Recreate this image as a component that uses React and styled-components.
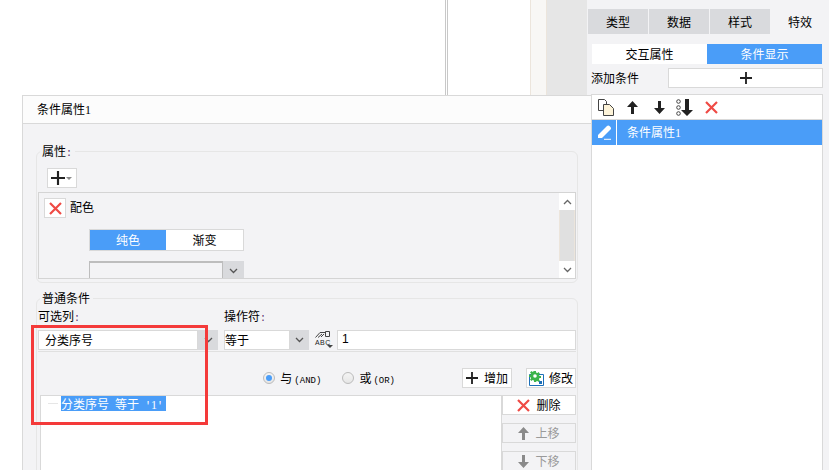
import React from "react";
import styled, { createGlobalStyle } from "styled-components";

const Global = createGlobalStyle`
  html, body { margin: 0; padding: 0; background: #fff; }
  * { box-sizing: border-box; }
  body { font-family: "Noto Sans CJK SC", "Liberation Sans", sans-serif; font-size: 12px; color: #000; }
`;

const BLUE = "#4a9df8";
const LINE = "#d9d9d9";
const GREY = "#d9dadd";
const BG = "#f3f3f5";

const Page = styled.div`
  position: relative; width: 829px; height: 470px; overflow: hidden; display: flex; background: #fff;
`;
const Canvas = styled.div`display: flex; width: 587px; height: 100%;`;
const Sheet = styled.div`width: 446px; background: #fff; border-right: 1px solid #c8c8c8;`;
const Sheet2 = styled.div`
  width: 83px; background: #fff; border-left: 1px solid #c8c8c8; margin-left: 1px;
`;
const Ruler = styled.div`
  width: 17px; background: #f8f7f5; border-left: 1px solid #ece5dc; border-right: 1px solid #ece5dc;
`;
const Gutter = styled.div`flex: 1; background: #e6e6e6;`;

const Side = styled.div`
  width: 242px; background: ${BG}; padding-top: 9px; display: flex; flex-direction: column;
`;
const Tabs = styled.div`display: flex; gap: 1px; padding-left: 1px; height: 25px; flex: none;`;
const Tab = styled.div`
  width: ${p => (p.$on ? "58px" : "60px")}; background: ${p => (p.$on ? BG : GREY)};
  display: flex; align-items: center; justify-content: center; padding-bottom: 1px;
`;
const SubTabs = styled.div`display: flex; margin: 10px 0 0 5px; width: 230px; height: 20px; flex: none;`;
const SubTab = styled.div`
  flex: 1; background: ${p => (p.$on ? BLUE : "#fff")}; color: ${p => (p.$on ? "#fff" : "#000")};
  display: flex; align-items: center; justify-content: center; padding-bottom: 2px;
`;
const AddRow = styled.div`
  display: flex; align-items: center; justify-content: space-between; height: 20px; width: 232px;
  margin: 4px 0 0 4px; flex: none;
`;
const AddLabel = styled.span`margin-bottom: 2px;`;
const AddBtn = styled.div`
  width: 155px; height: 20px; background: #fff; border: 1px solid ${LINE};
  display: flex; align-items: center; justify-content: center;
`;
const ListBox = styled.div`
  width: 232px; margin: 6px 0 0 4px; flex: 1; background: #fff; border: 1px solid ${LINE}; border-bottom: 0;
`;
const Toolbar = styled.div`
  height: 25px; display: flex; align-items: center; padding-left: 6px; border-bottom: 1px solid ${LINE};
`;
const ToolSlot = styled.span`
  display: flex; justify-content: center; width: ${p => p.$w}px; margin-left: ${p => p.$ml || 0}px;
`;
const ListRow = styled.div`
  height: 25px; background: ${BLUE}; color: #fff; display: flex; align-items: center;
`;
const PenCell = styled.div`
  width: 25px; height: 100%; border-right: 1px solid #fff; display: flex; align-items: center; justify-content: center;
`;
const RowText = styled.span`margin: 0 0 2px 10px;`;

const Dialog = styled.div`
  position: absolute; left: 22px; top: 95px; width: 570px; height: 376px; overflow: hidden;
  background: ${BG}; border: 1px solid ${LINE}; border-bottom: 0;
`;
const Title = styled.div`
  height: 28px; background: #fcfcfc; border-bottom: 1px solid ${LINE}; padding: 0 0 2px 14px;
  display: flex; align-items: center;
`;
const Body = styled.div`padding-left: 13px; width: 555px;`;
const Group = styled.div`
  position: relative; width: 542px; height: ${p => p.$h}px; margin-top: ${p => p.$mt}px;
  border: 1px solid #e6e6e6; border-radius: 6px; padding: ${p => p.$pad};
`;
const Legend = styled.span`
  position: absolute; left: 3px; top: -11px; padding: 0 3px 0 2px; background: ${BG}; line-height: 20px;
`;
const Colon = styled.span`color: #5a2d6e; font-family: "Liberation Mono", monospace; font-size: 10px;`;
const Latin = styled.span`font-family: "Liberation Mono", monospace; font-size: 10px;`;
const RadioLatin = styled.span`font-family: "Liberation Mono", monospace; font-size: 9px; margin-left: 2px;`;
const Digit = styled.span`font-family: "Liberation Serif", serif; font-size: 12px;`;
const PlusBtn = styled.div`
  width: 30px; height: 20px; margin-left: 10px; background: #fff; border: 1px solid ${LINE};
  display: flex; align-items: center; padding-left: 3px; gap: 1px;
`;
const Caret = styled.span`
  width: 0; height: 0; border: 3px solid transparent; border-top: 3px solid #8a8a8a; border-bottom: 0;
`;
const Inner = styled.div`
  position: relative; margin: 4px 0 0 1px; width: 538px; height: 87px; border: 1px solid #d4d4d4; overflow: hidden;
  padding: 5px 0 0 5px;
`;
const ColorRow = styled.div`display: flex; align-items: center; gap: 4px; height: 20px;`;
const ColorLabel = styled.span`margin-bottom: 3px;`;
const XBtn = styled.div`
  width: 22px; height: 20px; background: #fff; border: 1px solid ${LINE};
  display: flex; align-items: center; justify-content: center;
`;
const Segment = styled.div`
  display: flex; width: 155px; height: 22px; margin: 11px 0 0 45px; border: 1px solid ${LINE}; background: #fff;
`;
const Seg = styled.div`
  width: ${p => (p.$on ? "76px" : "77px")}; background: ${p => (p.$on ? BLUE : "#fff")}; color: ${p => (p.$on ? "#fff" : "#000")};
  display: flex; align-items: center; justify-content: center; padding-bottom: 2px;
`;
const FillCombo = styled.div`
  display: flex; width: 155px; height: 20px; margin: 10px 0 0 45px;
`;
const FillInput = styled.div`
  flex: 1; border: 1px solid #bdbdbd; border-top-width: 2px; border-bottom: 0; background: ${BG};
`;
const Arrow = styled.div`
  width: ${p => p.$w}px; background: ${GREY}; display: flex; align-items: center; justify-content: center;
`;
const Scroll = styled.div`
  position: absolute; right: 0; top: 0; bottom: 0; width: 16px; display: flex; flex-direction: column;
`;
const ScrollBtn = styled.div`
  height: 17px; background: #fff; display: flex; align-items: center; justify-content: center;
`;
const Thumb = styled.div`
  flex: 1; background: #e0e0e0; border-left: 1px solid #ece5dc; border-right: 1px solid #ece5dc;
`;
const Labels = styled.div`
  display: flex; height: 14px; margin: 10px 0 0 1px; line-height: 14px;
`;
const LabelCell = styled.div`width: ${p => p.$w}px;`;
const FieldRow = styled.div`
  display: flex; height: 22px; margin: 7px 0 0 1px; width: 538px; border-bottom: 1px solid #e0e0e0;
`;
const Combo = styled.div`display: flex; width: ${p => p.$w}px; height: 20px; margin-right: ${p => p.$mr}px;`;
const Input = styled.div`
  flex: 1; background: #fff; border: 1px solid ${LINE}; display: flex; align-items: center; padding: 0 0 2px ${p => p.$pl}px;
`;
const ValueInput = styled(Input)`height: 20px; font-family: "Liberation Sans", sans-serif;`;
const TypeIcon = styled.div`
  position: relative; width: 19px; height: 20px; margin: 0 4px 0 5px;
`;
const FlagSvg = styled.svg`position: absolute; left: 1px; top: 0;`;
const Abc = styled.span`
  position: absolute; left: 1px; top: 9px; font-family: "Liberation Sans", sans-serif; font-size: 7px; line-height: 8px; letter-spacing: 0.4px; color: #222;
`;
const TypeCaret = styled(Caret)`position: absolute; right: 0; bottom: 2px; border-top-color: #444;`;
const OpsRow = styled.div`
  display: flex; align-items: center; justify-content: flex-end; height: 20px; margin-top: 16px; width: 538px; margin-left: 1px;
`;
const Radio = styled.label`
  display: flex; align-items: center; gap: 5px; margin-right: ${p => p.$mr}px;
`;
const RadioText = styled.span`margin-bottom: 2px;`;
const Dot = styled.span`
  width: 12px; height: 12px; border-radius: 50%; border: 1px solid #bbb; display: flex; align-items: center; justify-content: center;
  background: linear-gradient(#f4f4f4, #e6e6e6);
  &::after { content: ""; width: 6px; height: 6px; border-radius: 50%; background: ${p => (p.$on ? BLUE : "transparent")}; }
`;
const Btn = styled.div`
  width: ${p => p.$w || 50}px; height: 20px; background: ${p => (p.$ghost ? BG : "#fff")}; border: 1px solid ${LINE}; margin-left: ${p => p.$ml || 0}px;
  margin-top: ${p => p.$mt || 0}px;
  color: ${p => (p.$ghost ? "#9a9a9a" : "#000")}; display: flex; align-items: center; justify-content: center; gap: ${p => p.$gap || 5}px;
`;
const BtnText = styled.span`margin-bottom: 2px;`;
const ListArea = styled.div`display: flex; margin: 7px 0 0 3px;`;
const Tree = styled.div`
  position: relative; width: 462px; height: 90px; background: #fff; border: 1px solid ${LINE}; padding: 0 0 0 20px;
`;
const TreeDash = styled.span`
  position: absolute; left: 7px; top: 7px; width: 10px; height: 1px; background: #e6e6e6;
`;
const Selected = styled.span`
  display: block; width: 105px; height: 15px; line-height: 15px; background: ${BLUE}; color: #fff; white-space: pre;
`;
const BtnCol = styled.div`display: flex; flex-direction: column;`;
const Annot = styled.div`
  position: absolute; left: 31px; top: 325px; width: 177px; height: 100px; border: 3px solid #f43a3a; pointer-events: none;
`;

const Plus = ({ s = 13, w = 2 }) => (
  <svg width={s} height={s} viewBox="0 0 13 13"><path d="M0 6.5h13M6.5 0v13" stroke="#222" strokeWidth={w} fill="none" /></svg>
);
const Cross = ({ s = 13 }) => (
  <svg width={s} height={s} viewBox="0 0 13 13"><path d="M1 1l11 11M12 1L1 12" stroke="#ef4a45" strokeWidth="2.2" fill="none" /></svg>
);
const Chev = ({ up, c = "#555", w = 9 }) => (
  <svg width={w} height="6" viewBox="0 0 9 6"><path d={up ? "M1 5l3.5-3.5L8 5" : "M1 1l3.5 3.5L8 1"} stroke={c} strokeWidth="1.3" fill="none" /></svg>
);
const ArrowUp = ({ c = "#222" }) => (
  <svg width="11" height="13" viewBox="0 0 11 13"><path d="M5.5 0L11 6H7v7H4V6H0z" fill={c} /></svg>
);
const ArrowDown = ({ c = "#222" }) => (
  <svg width="11" height="13" viewBox="0 0 11 13"><path d="M5.5 13L11 7H7V0H4v7H0z" fill={c} /></svg>
);
const Copy = () => (
  <svg width="17" height="17" viewBox="0 0 17 17">
    <path d="M.5 .5h6l2 2v9h-8z" fill="#fff" stroke="#444" />
    <path d="M5.5 5.5h6l4 4v7h-10z" fill="#fdf3d8" stroke="#444" />
  </svg>
);
const Multi = () => (
  <svg width="17" height="17" viewBox="0 0 17 17">
    <circle cx="2.5" cy="2.5" r="1.8" fill="#fff" stroke="#444" />
    <circle cx="2.5" cy="8.5" r="1.8" fill="#fff" stroke="#444" />
    <circle cx="2.5" cy="14.5" r="1.8" fill="#fff" stroke="#444" />
    <path d="M11 17l6-6h-4V0H9v11H5z" fill="#222" />
  </svg>
);
const Pencil = () => (
  <svg width="15" height="15" viewBox="0 0 15 15">
    <path d="M1 10L10 1c1-1 2-.5 3 .5s1.500 2 .5 3L5 13H1z" fill="#fff" />
    <path d="M7 14.300h7" stroke="#fff" strokeWidth="1" />
  </svg>
);
const Gear = () => (
  <svg width="15" height="15" viewBox="0 0 15 15">
    <path d="M.5 3.500h14v11H.5z" fill="#fff" stroke="#1d6fb8" />
    <rect x="10" y="10" width="3" height="3" fill="#1d6fb8" />
    <path d="M5 0h2v1.500l1.500.6 1-1 1.400 1.400-1 1 .6 1.500H12v2h-1.500l-.6 1.500 1 1-1.400 1.400-1-1-1.500.6V11H5V9.500l-1.500-.6-1 1L1 8.500l1-1L1.400 6H0V4h1.400L2 2.500l-1-1L2.500 0l1 1z" fill="#3cb44a" />
    <circle cx="6" cy="5" r="1.800" fill="#fff" />
  </svg>
);

export default function App() {
  return (
    <Page>
      <Global />
      <Canvas>
        <Sheet />
        <Sheet2 />
        <Ruler />
        <Gutter />
      </Canvas>
      <Side>
        <Tabs>
          <Tab>类型</Tab>
          <Tab>数据</Tab>
          <Tab>样式</Tab>
          <Tab $on>特效</Tab>
        </Tabs>
        <SubTabs>
          <SubTab>交互属性</SubTab>
          <SubTab $on>条件显示</SubTab>
        </SubTabs>
        <AddRow>
          <AddLabel>添加条件</AddLabel>
          <AddBtn><Plus s={12} /></AddBtn>
        </AddRow>
        <ListBox>
          <Toolbar>
            <ToolSlot $w={17}><Copy /></ToolSlot>
            <ToolSlot $w={35}><ArrowUp /></ToolSlot>
            <ToolSlot $w={18}><ArrowDown /></ToolSlot>
            <ToolSlot $w={17} $ml={8}><Multi /></ToolSlot>
            <ToolSlot $w={36}><Cross /></ToolSlot>
          </Toolbar>
          <ListRow>
            <PenCell><Pencil /></PenCell>
            <RowText>条件属性<Digit>1</Digit></RowText>
          </ListRow>
        </ListBox>
      </Side>

      <Dialog>
        <Title><span>条件属性<Digit>1</Digit></span></Title>
        <Body>
          <Group $h={132} $mt={27} $pad="16px 0 0 0">
            <Legend>属性<Colon>:</Colon></Legend>
            <PlusBtn><Plus s={14} /><Caret /></PlusBtn>
            <Inner>
              <ColorRow>
                <XBtn><Cross /></XBtn>
                <ColorLabel>配色</ColorLabel>
              </ColorRow>
              <Segment>
                <Seg $on>纯色</Seg>
                <Seg>渐变</Seg>
              </Segment>
              <FillCombo>
                <FillInput />
                <Arrow $w={21}><Chev /></Arrow>
              </FillCombo>
              <Scroll>
                <ScrollBtn><Chev up c="#666" /></ScrollBtn>
                <Thumb />
                <ScrollBtn><Chev c="#666" /></ScrollBtn>
              </Scroll>
            </Inner>
          </Group>
          <Group $h={200} $mt={15} $pad="0">
            <Legend>普通条件</Legend>
            <Labels>
              <LabelCell $w={186}>可选列<Colon>:</Colon></LabelCell>
              <LabelCell $w={100}>操作符<Colon>:</Colon></LabelCell>
            </Labels>
            <FieldRow>
              <Combo $w={180} $mr={6}>
                <Input $pl={6}>分类序号</Input>
                <Arrow $w={20}><Chev /></Arrow>
              </Combo>
              <Combo $w={85} $mr={0}>
                <Input $pl={0}>等于</Input>
                <Arrow $w={19}><Chev /></Arrow>
              </Combo>
              <TypeIcon>
                <FlagSvg width="16" height="9" viewBox="0 0 16 9">
                  <path d="M.5 7.500L5 2.500h5M3 7.500l4-3.500M6 7l3-3M10.500 1.500h4v5h-4z" stroke="#444" fill="none" />
                </FlagSvg>
                <Abc>ABC</Abc>
                <TypeCaret />
              </TypeIcon>
              <ValueInput $pl={4}>1</ValueInput>
            </FieldRow>
            <OpsRow>
              <Radio $mr={21}><Dot $on /><RadioText>与<RadioLatin>(AND)</RadioLatin></RadioText></Radio>
              <Radio $mr={67}><Dot /><RadioText>或<RadioLatin>(OR)</RadioLatin></RadioText></Radio>
              <Btn $gap={6}><Plus s={12} /><BtnText>增加</BtnText></Btn>
              <Btn $ml={14}><Gear /><BtnText>修改</BtnText></Btn>
            </OpsRow>
            <ListArea>
              <Tree>
                <TreeDash />
                <Selected>分类序号<Latin> </Latin>等于<Latin> '</Latin><Digit>1</Digit><Latin>'</Latin></Selected>
              </Tree>
              <BtnCol>
                <Btn $w={74} $gap={6}><Cross /><BtnText>删除</BtnText></Btn>
                <Btn $w={74} $mt={8} $ghost $gap={6}><ArrowUp c="#8a8a8a" /><BtnText>上移</BtnText></Btn>
                <Btn $w={74} $mt={8} $ghost $gap={6}><ArrowDown c="#8a8a8a" /><BtnText>下移</BtnText></Btn>
              </BtnCol>
            </ListArea>
          </Group>
        </Body>
      </Dialog>
      <Annot />
    </Page>
  );
}
